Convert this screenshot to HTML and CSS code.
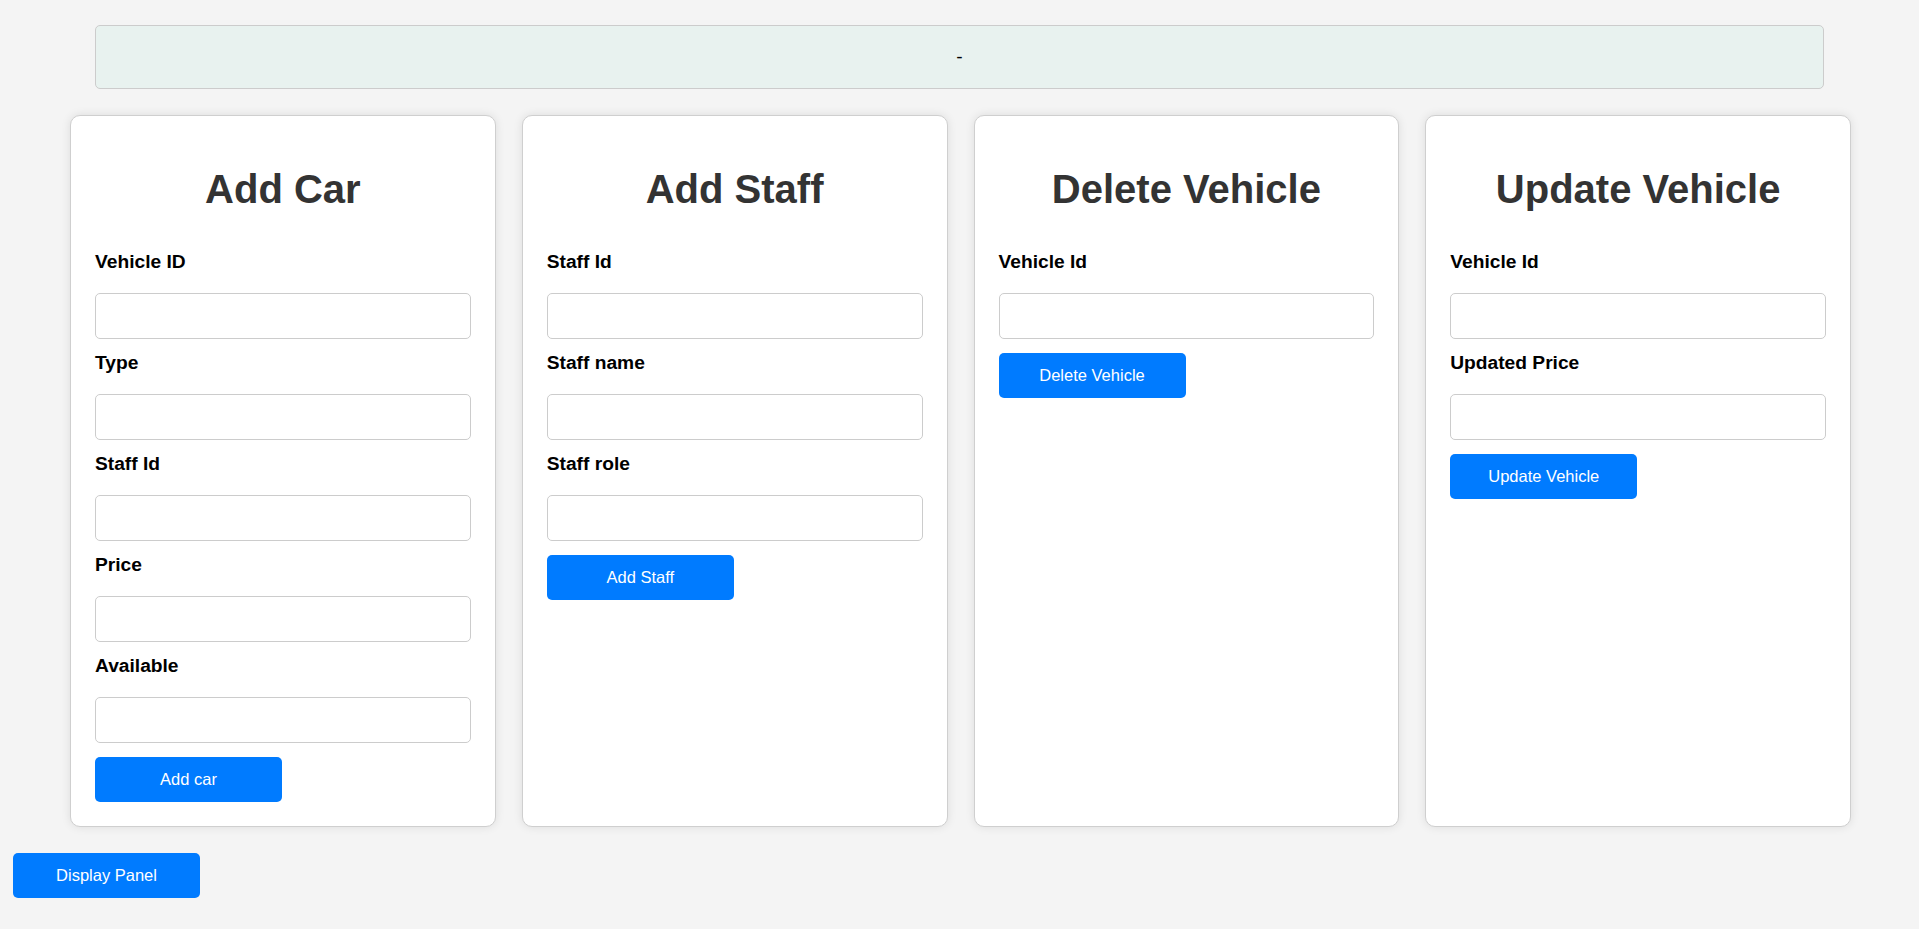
FILE: index.html
```html
<!DOCTYPE html>
<html lang="en">
<head>
<meta charset="utf-8">
<title>Vehicle Admin</title>
<link rel="stylesheet" href="styles.css">
</head>
<body>
  <div class="banner">-</div>

  <div class="cards">
    <section class="card">
      <h2 class="card-title">Add Car</h2>
      <label class="field-label">Vehicle ID</label>
      <input class="field-input" type="text">
      <label class="field-label">Type</label>
      <input class="field-input" type="text">
      <label class="field-label">Staff Id</label>
      <input class="field-input" type="text">
      <label class="field-label">Price</label>
      <input class="field-input" type="text">
      <label class="field-label">Available</label>
      <input class="field-input" type="text">
      <button class="btn card-btn">Add car</button>
    </section>

    <section class="card">
      <h2 class="card-title">Add Staff</h2>
      <label class="field-label">Staff Id</label>
      <input class="field-input" type="text">
      <label class="field-label">Staff name</label>
      <input class="field-input" type="text">
      <label class="field-label">Staff role</label>
      <input class="field-input" type="text">
      <button class="btn card-btn">Add Staff</button>
    </section>

    <section class="card">
      <h2 class="card-title">Delete Vehicle</h2>
      <label class="field-label">Vehicle Id</label>
      <input class="field-input" type="text">
      <button class="btn card-btn">Delete Vehicle</button>
    </section>

    <section class="card">
      <h2 class="card-title">Update Vehicle</h2>
      <label class="field-label">Vehicle Id</label>
      <input class="field-input" type="text">
      <label class="field-label">Updated Price</label>
      <input class="field-input" type="text">
      <button class="btn card-btn">Update Vehicle</button>
    </section>
  </div>

  <div class="footer">
    <button class="btn panel-btn">Display Panel</button>
  </div>
</body>
</html>
```

FILE: styles.css
```css
html, body {
  margin: 0;
  padding: 0;
}

body {
  background: #f4f4f4;
  font-family: "Liberation Sans", Arial, sans-serif;
  font-size: 16px;
  color: #000;
}

.banner {
  width: 90%;
  margin: 25px auto 13px;
  padding: 20px 0;
  background: #e8f2ef;
  border: 1px solid #cccccc;
  border-radius: 5px;
  text-align: center;
  font-size: 19.2px;
  line-height: normal;
}

.cards {
  display: flex;
  align-items: stretch;
  padding: 0 55px 0 57px;
}

.card {
  flex: 1 1 0;
  min-width: 0;
  margin: 13px;
  padding: 24px;
  background: #ffffff;
  border: 1px solid #cfcfcf;
  border-radius: 10px;
  box-shadow: 0 0 10px rgba(0, 0, 0, 0.1);
  display: flex;
  flex-direction: column;
  align-items: flex-start;
}

.card-title {
  align-self: stretch;
  margin: 27px 0 38.5px;
  font-size: 40px;
  font-weight: bold;
  line-height: normal;
  text-align: center;
  color: #333333;
}

.field-label {
  display: block;
  margin: 0 0 20px;
  font-size: 19.2px;
  font-weight: bold;
  line-height: normal;
  color: #000;
}

.field-input {
  box-sizing: border-box;
  align-self: stretch;
  width: 100%;
  height: 46px;
  margin: 0 0 13px;
  padding: 10px;
  border: 1px solid #cccccc;
  border-radius: 5px;
  background: #fff;
  font-family: inherit;
  font-size: 16px;
}

.btn {
  box-sizing: border-box;
  width: 187px;
  height: 45px;
  padding: 0;
  border: none;
  border-radius: 5px;
  background: #007bff;
  color: #ffffff;
  font-family: "Liberation Sans", Arial, sans-serif;
  font-size: 16.5px;
  cursor: pointer;
}

.card-btn {
  margin-top: 1px;
}

.footer {
  padding: 0;
}

.panel-btn {
  margin: 13px;
}
```
